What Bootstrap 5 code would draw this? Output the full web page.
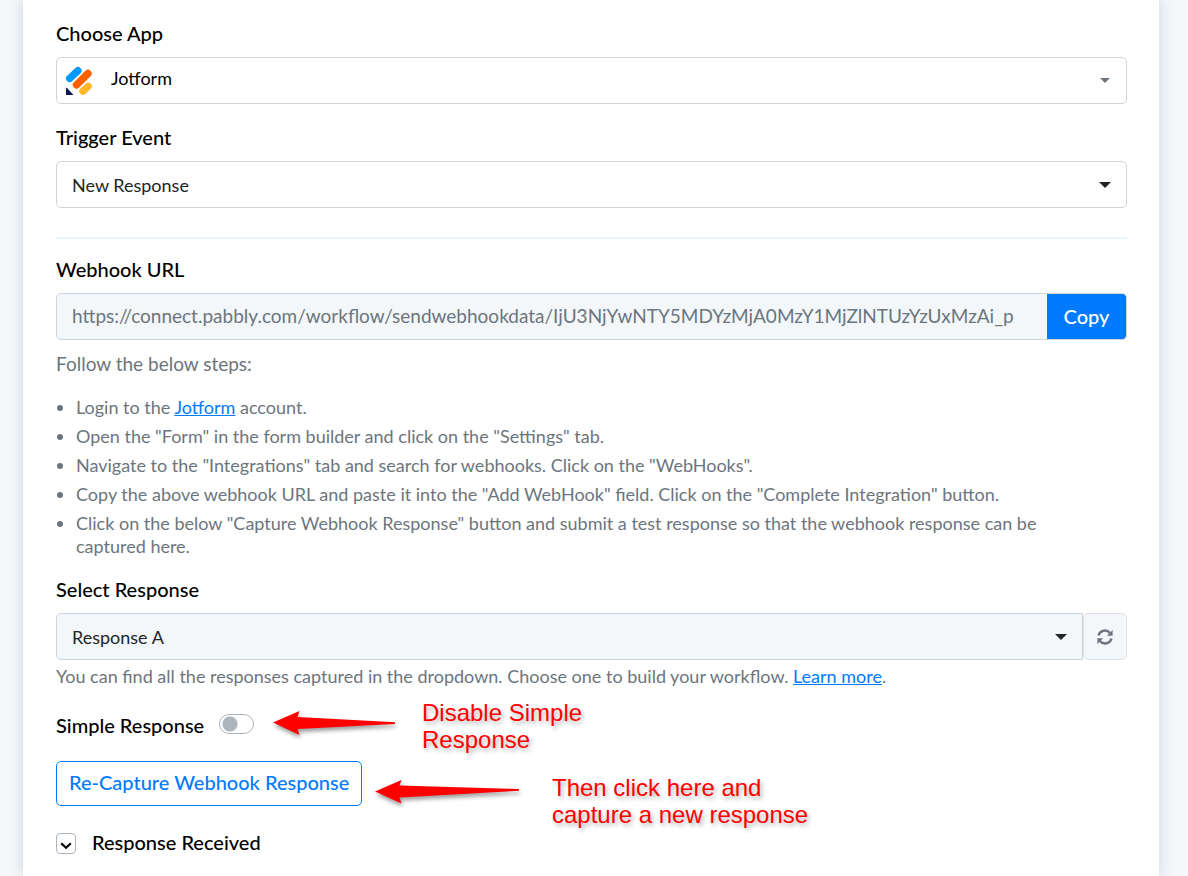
<!DOCTYPE html>
<html lang="en">
<head>
<meta charset="utf-8">
<meta name="viewport" content="width=device-width, initial-scale=1">
<title>Trigger setup</title>
<link href="https://cdn.jsdelivr.net/npm/bootstrap@5.3.0/dist/css/bootstrap.min.css" rel="stylesheet">
<style>
  :root { --line: #ced4da; --tint: #f3f7fa; --blue: #007bff; --soft: #6c757d; }
  body { font-family: Lato, "Open Sans", sans-serif; font-size: 18px; line-height: 23px; background: var(--tint); color: #000; }
  .panel { min-height: 100vh; margin: 0 29px 0 23px; padding: 21px 32px 20px 33px; background: #fff; box-shadow: 0 0 12px rgba(60, 80, 100, .22); }
  .field-label { display: block; font-size: 20px; line-height: 24px; font-weight: 500; margin-bottom: 12px; }
  .block { margin-bottom: 21px; }
  .field { height: 47px; padding: 0 15px; font-size: 18px; line-height: 24px; color: #212529; border: 1px solid var(--line); border-radius: 5px; background: #fff none; }
  .field-tint, .field-tint:disabled { background-color: var(--tint); }
  .field-app { padding: 0 15px 5px 54px; color: #000; }
  .picker::after { content: ""; position: absolute; right: 16px; top: 21px; border: 6px solid transparent; border-top-color: #212529; border-bottom: 0; pointer-events: none; }
  .picker-soft::after { right: 17px; border-width: 5px 5px 0; border-top-color: var(--soft); }
  .app-logo { position: absolute; left: 9px; top: 9px; pointer-events: none; }
  .rule { height: 2px; margin: 29px 0 18px; border: 0; opacity: 1; background: #ebf5ff; }
  .field-url { font-size: 19px; padding-bottom: 2px; color: var(--soft); }
  .btn-copy { width: 80px; padding: 0 0 2px; font-size: 20px; font-weight: 500; color: #fff; background: var(--blue); border: 1px solid var(--line); border-left: 0; border-radius: 0 5px 5px 0; }
  .soft { color: var(--soft); }
  .steps-title { font-size: 19px; line-height: 24px; margin: 12px 0 20px; }
  .steps { padding: 0 24px 0 20px; margin-bottom: 19px; }
  .steps li + li { margin-top: 6px; }
  .panel a { color: var(--blue); }
  .btn-refresh { width: 44px; padding: 0 0 2px; background: var(--tint); border: 1px solid #dee2e6; border-radius: 5px; }
  .help { margin: 5px 0 25px; }
  .toggle { width: 35px; height: 20px; margin: 0 0 3px 15px; border: 1px solid #adb5bd; border-radius: 10px; background: radial-gradient(circle at 10px 9px, #adb5bd 7px, transparent 8px) #fff; appearance: none; }
  .btn-capture { min-width: 306px; height: 45px; padding: 0 12px 3px; font-size: 20px; font-weight: 500; color: var(--blue); background: #fff; border: 1px solid var(--blue); border-radius: 5px; }
  .btn-fold { width: 20px; height: 21px; padding: 0; margin-top: 3px; background: #fff; border: 1px solid #adb5bd; border-radius: 4px; line-height: 1; }
  .note { position: absolute; font: 24px/27px "Liberation Sans", Arial, sans-serif; color: #f00; white-space: nowrap; text-shadow: 2px 3px 4px rgba(0, 0, 0, .3); }
  .arrow { position: absolute; overflow: visible; filter: drop-shadow(1px 3px 2px rgba(0, 0, 0, .4)); }
  .arrow-toggle { left: 217px; top: -3px; }
  .note-toggle { left: 366px; top: -14px; }
  .arrow-capture { left: 319px; top: 18px; }
  .note-capture { left: 496px; top: 13px; }
</style>
</head>
<body>
<main class="panel">
  <div class="block">
    <label class="field-label" for="app">Choose App</label>
    <div class="picker picker-soft position-relative">
      <select class="form-select field field-app" id="app"><option>Jotform</option></select>
      <svg class="app-logo" width="28" height="30" viewBox="0 0 28 30" aria-hidden="true">
        <g stroke-width="7.4" stroke-linecap="round" fill="none">
          <path d="M4.7 12.4L12.900 4.700" stroke="#09f"/>
          <path d="M11.500 18.800L23 7.500" stroke="#ff6100"/>
          <path d="M18 25.200L23.100 20.300" stroke="#ffb629"/>
        </g>
        <path d="M1 22.500Q1 21.500 2 22L8.500 29H1Z" fill="#0a1551"/>
      </svg>
    </div>
  </div>
  <div>
    <label class="field-label" for="event">Trigger Event</label>
    <div class="picker position-relative">
      <select class="form-select field" id="event"><option>New Response</option></select>
    </div>
  </div>
  <hr class="rule">
  <label class="field-label" for="url">Webhook URL</label>
  <div class="input-group flex-nowrap">
    <input class="form-control field field-tint field-url" id="url" type="text" readonly value="https://connect.pabbly.com/workflow/sendwebhookdata/IjU3NjYwNTY5MDYzMjA0MzY1MjZlNTUzYzUxMzAi_p">
    <button class="btn btn-copy" type="button">Copy</button>
  </div>
  <p class="soft steps-title">Follow the below steps:</p>
  <ul class="soft steps">
    <li>Login to the <a href="#jotform">Jotform</a> account.</li>
    <li>Open the "Form" in the form builder and click on the "Settings" tab.</li>
    <li>Navigate to the "Integrations" tab and search for webhooks. Click on the "WebHooks".</li>
    <li>Copy the above webhook URL and paste it into the "Add WebHook" field. Click on the "Complete Integration" button.</li>
    <li>Click on the below "Capture Webhook Response" button and submit a test response so that the webhook response can be captured here.</li>
  </ul>
  <label class="field-label" for="response">Select Response</label>
  <div class="d-flex">
    <div class="picker position-relative flex-grow-1">
      <select class="form-select field field-tint rounded-end-0" id="response"><option>Response A</option></select>
    </div>
    <button class="btn btn-refresh soft" type="button" aria-label="Refresh responses">
      <svg width="16" height="16" viewBox="0 0 16 16" fill="none" stroke="currentColor" stroke-width="2.400" aria-hidden="true">
        <path d="M1.500 6.500A6.600 6.600 0 0 1 13 4M14.500 9.500A6.600 6.600 0 0 1 3 12"/>
        <path d="M15.600 1V6.700H9.900ZM.4 15V9.300H6.100Z" fill="currentColor" stroke="none"/>
      </svg>
    </button>
  </div>
  <p class="soft help">You can find all the responses captured in the dropdown. Choose one to build your workflow. <a href="#learn">Learn more</a>.</p>
  <div class="position-relative d-flex align-items-center mb-4">
    <label class="field-label mb-0" for="simple">Simple Response</label>
    <input class="toggle" id="simple" type="checkbox" role="switch">
    <svg class="arrow arrow-toggle" width="124" height="26" viewBox="0 0 124 26" aria-hidden="true"><path d="M0 12.500L26.500 1L24.500 7L122 12.200V14L24.500 19L26.500 25Z" fill="#f00"/></svg>
    <div class="note note-toggle">Disable Simple<br>Response</div>
  </div>
  <div class="position-relative mb-4">
    <button class="btn btn-capture" type="button">Re-Capture Webhook Response</button>
    <svg class="arrow arrow-capture" width="146" height="26" viewBox="0 0 146 26" aria-hidden="true"><path d="M0 12.500L26.500 1L24.500 6.500L144 10V11.800L24.500 18.500L26.500 24.500Z" fill="#f00"/></svg>
    <div class="note note-capture">Then click here and<br>capture a new response</div>
  </div>
  <div class="d-flex align-items-center">
    <button class="btn-fold" id="fold" type="button" aria-label="Expand response">
      <svg width="12" height="8" viewBox="0 0 12 8" fill="none" stroke="#000" stroke-width="2.200" aria-hidden="true"><path d="M1.200 1.200L6 5.800L10.800 1.200"/></svg>
    </button>
    <label class="field-label mb-0 ms-3" for="fold">Response Received</label>
  </div>
</main>
<script src="https://cdn.jsdelivr.net/npm/bootstrap@5.3.0/dist/js/bootstrap.bundle.min.js"></script>
</body>
</html>
